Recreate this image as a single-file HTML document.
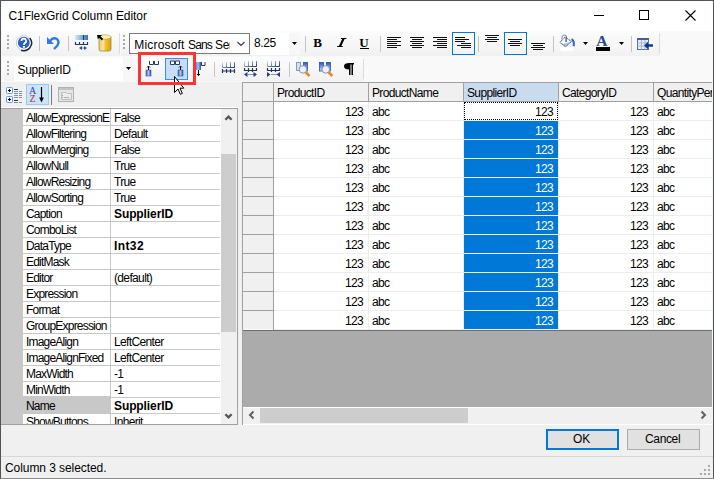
<!DOCTYPE html>
<html><head><meta charset="utf-8">
<style>
*{box-sizing:border-box}
html,body{margin:0;padding:0}
body{width:714px;height:479px;overflow:hidden;position:relative;background:#f0f0f0;font-family:"Liberation Sans",sans-serif;color:#000}
.a{position:absolute}
.t{position:absolute;white-space:nowrap;line-height:1}
.f11{font-size:11px;letter-spacing:-0.2px}
.p11{font-size:12px;letter-spacing:-0.8px}
.v11{font-size:12px;letter-spacing:-0.65px}
.g11{font-size:12px;letter-spacing:-0.65px}
.f12{font-size:12px;letter-spacing:-0.15px}
svg{position:absolute;overflow:visible}
</style></head><body>
<!-- window frame -->
<div class="a" style="left:0;top:0;width:714px;height:479px;border:1px solid #4f535a;border-bottom-color:#8a8a8a"></div>
<!-- title bar -->
<div class="a" style="left:1px;top:1px;width:712px;height:30px;background:#fff"></div>
<div class="t f12" style="left:8.5px;top:10px;letter-spacing:-0.07px">C1FlexGrid Column Editor</div>
<div class="a" style="left:594px;top:15px;width:10px;height:1px;background:#000"></div>
<div class="a" style="left:639px;top:10px;width:10px;height:10px;border:1px solid #000"></div>
<svg style="left:685px;top:10px" width="11" height="11"><path d="M0.5 0.5L10.5 10.5M10.5 0.5L0.5 10.5" stroke="#000" stroke-width="1.1"/></svg>

<!-- toolstrip container -->
<div class="a" style="left:1px;top:31px;width:712px;height:51px;background:#f9f9f9"></div>


<!-- toolbar 1 -->
<div class="a" style="left:2px;top:31px;width:118px;height:25px;background:linear-gradient(#fcfcfc,#f1f1f1)"></div>
<div class="a" style="left:119px;top:33px;width:1px;height:21px;background:#dcdcdc"></div>
<!-- toolbar 2 -->
<div class="a" style="left:121px;top:31px;width:539px;height:25px;background:linear-gradient(#fcfcfc,#f1f1f1)"></div>
<div class="a" style="left:659px;top:33px;width:1px;height:21px;background:#dcdcdc"></div>
<!-- toolbar 3 -->
<div class="a" style="left:4px;top:57px;width:360px;height:24px;background:linear-gradient(#fcfcfc,#f2f2f2);border-top-right-radius:2px"></div>
<div class="a" style="left:363px;top:59px;width:1px;height:20px;background:#dadada"></div>
<!-- combos -->
<div class="a" style="left:14px;top:58px;width:121px;height:23px;background:#fff"></div>
<div class="a" style="left:123px;top:58px;width:12px;height:23px;background:#f7f7f7"></div>
<div class="t f12" style="left:17.5px;top:64px;font-size:12px;letter-spacing:-0.3px">SupplierID</div>
<div class="a" style="left:129px;top:33px;width:121px;height:21px;background:#fff;border:1px solid #7a7a7a"></div>
<div class="a" style="left:130px;top:34px;width:100px;height:19px;overflow:hidden"><div class="t f12" style="left:4.3px;top:5px;letter-spacing:0.17px">Microsoft</div><div class="t f12" style="left:58px;top:5px;letter-spacing:-0.85px">Sans</div><div class="t f12" style="left:85px;top:5px;letter-spacing:-0.3px">Ser</div></div>
<div class="a" style="left:250px;top:33px;width:50px;height:22px;background:#fff"></div>
<div class="a" style="left:289px;top:33px;width:11px;height:22px;background:#f7f7f7"></div>
<div class="t f12" style="left:254px;top:37px;letter-spacing:-0.4px">8.25</div>
<svg class="a" style="left:0;top:0" width="714" height="479">
 <!-- grippers -->
 <g fill="#a8a8a8">
  <rect x="7" y="35" width="2" height="2"/><rect x="7" y="39" width="2" height="2"/><rect x="7" y="43" width="2" height="2"/><rect x="7" y="47" width="2" height="2"/>
  <rect x="123" y="35" width="2" height="2"/><rect x="123" y="39" width="2" height="2"/><rect x="123" y="43" width="2" height="2"/><rect x="123" y="47" width="2" height="2"/>
  <rect x="7" y="61" width="2" height="2"/><rect x="7" y="65" width="2" height="2"/><rect x="7" y="69" width="2" height="2"/><rect x="7" y="73" width="2" height="2"/>
 </g>
 <!-- separators -->
 <g fill="#c4c4c4">
  <rect x="39" y="36" width="1" height="15"/><rect x="68" y="36" width="1" height="15"/>
  <rect x="305" y="36" width="1" height="16"/><rect x="380" y="36" width="1" height="16"/><rect x="478" y="36" width="1" height="16"/><rect x="553" y="36" width="1" height="16"/><rect x="631" y="36" width="1" height="16"/>
  <rect x="214" y="62" width="1" height="15"/><rect x="289" y="62" width="1" height="15"/>
 </g>
 <!-- help -->
 <circle cx="23.8" cy="43" r="7.4" fill="#fff" stroke="#c4cde0" stroke-width="1"/>
 <path d="M29.7 38.05 A7.7 7.7 0 0 1 21.17 50.24" fill="none" stroke="#22252e" stroke-width="1.4"/>
 <circle cx="23.8" cy="42.7" r="5.9" fill="#2a5fc4"/>
 <path d="M21.5 41 A2.3 2.3 0 1 1 24.7 43.1 Q23.9 43.7 23.9 45" fill="none" stroke="#fff" stroke-width="1.7"/>
 <rect x="22.9" y="46" width="2" height="1.8" fill="#fff"/>
 <!-- undo -->
 <path d="M50 41 Q53 37 57 39 Q60 42 57 46 L54 49" fill="none" stroke="#2f7ae6" stroke-width="2.4"/>
 <path d="M47 37 L47 44 L54 44 Z" fill="#2f7ae6"/>
 <!-- grid icon (toolbar1) -->
 <rect x="75" y="35" width="13" height="5" fill="url(#gb)"/>
 <rect x="83" y="35" width="1" height="5" fill="#1b3a6b"/>
 <path d="M75.5 42 V44.5 H87.5 V42 M79.5 42 V44.5 M83.5 42 V44.5" fill="none" stroke="#1b3a6b" stroke-width="1.2"/>
 <path d="M79 48 L82 46 L82 50 Z M84 46 L87 48 L84 50 Z" fill="#2a4f9a"/>
 <rect x="82.5" y="47.5" width="1" height="1" fill="#1b3a6b"/>
 <!-- db icon -->
 <path d="M99 37 V49 Q99 51 101 51 H109 Q111 51 111 49 V37 Z" fill="url(#dbg)" stroke="#9c8c4c" stroke-width="0.8"/>
 <ellipse cx="105" cy="37" rx="6" ry="2.2" fill="#fff3a8" stroke="#a89850" stroke-width="0.6"/>
 <path d="M97 35 H102 L100.6 36.4 L103.2 39 L101.8 40.4 L99.2 37.8 L97.8 39.2 Z" fill="#000"/>
 <defs>
  <linearGradient id="dbg" x1="0" x2="1"><stop offset="0" stop-color="#f3c85a"/><stop offset=".35" stop-color="#fbe9a0"/><stop offset=".55" stop-color="#f6bf2c"/><stop offset="1" stop-color="#e49c08"/></linearGradient>
  <linearGradient id="cg" x1="0" y1="0" x2="1" y2="1"><stop offset="0" stop-color="#e0e8f6"/><stop offset="1" stop-color="#1f3558"/></linearGradient>
  <linearGradient id="bb" x1="0" y1="0" x2="0" y2="1"><stop offset="0" stop-color="#1e5ad8"/><stop offset="1" stop-color="#c4d8f8"/></linearGradient>
  <linearGradient id="gb" x1="0" x2="1"><stop offset="0" stop-color="#dbe8fb"/><stop offset="1" stop-color="#2f6fd6"/></linearGradient>
  <linearGradient id="cyl" x1="0" x2="1"><stop offset="0" stop-color="#3a5fc0"/><stop offset=".5" stop-color="#a9c4f2"/><stop offset="1" stop-color="#2d4fae"/></linearGradient>
 </defs>
 <!-- combo arrows -->
 <path d="M237.5 42 L241 45.5 L244.5 42" fill="none" stroke="#333" stroke-width="1.1"/>
 <path d="M292 42 L297 42 L294.5 45 Z" fill="#000"/>
 <path d="M126 67 L131 67 L128.5 70 Z" fill="#000"/>
 <!-- B I U -->
 <text x="313.3" y="47" font-family="Liberation Serif" font-weight="bold" font-size="13" fill="#000">B</text>
 <path d="M341 38 H346.5 L346.2 39 H344.6 L341.3 46 H342.8 L342.5 47 H337 L337.3 46 H338.9 L342.2 39 H340.7 Z" fill="#000"/>
 <text x="359.3" y="47" font-family="Liberation Serif" font-weight="bold" font-size="13" fill="#000">U</text>
 <rect x="360" y="48" width="9" height="1" fill="#000"/>
 <!-- align icons -->
 <g fill="#111">
  <rect x="387" y="37" width="14" height="1"/><rect x="387" y="39" width="10" height="1"/><rect x="387" y="41" width="14" height="1"/><rect x="387" y="43" width="10" height="1"/><rect x="387" y="45" width="14" height="1"/><rect x="387" y="47" width="10" height="1"/>
  <rect x="410" y="37" width="14" height="1"/><rect x="412" y="39" width="10" height="1"/><rect x="410" y="41" width="14" height="1"/><rect x="412" y="43" width="10" height="1"/><rect x="410" y="45" width="14" height="1"/><rect x="412" y="47" width="10" height="1"/>
  <rect x="433" y="37" width="14" height="1"/><rect x="437" y="39" width="10" height="1"/><rect x="433" y="41" width="14" height="1"/><rect x="437" y="43" width="10" height="1"/><rect x="433" y="45" width="14" height="1"/><rect x="437" y="47" width="10" height="1"/>
  <rect x="455" y="37" width="10" height="1"/><rect x="455" y="39" width="14" height="1"/><rect x="455" y="41" width="10" height="1"/><rect x="461" y="43" width="10" height="1"/><rect x="457" y="45" width="14" height="1"/><rect x="461" y="47" width="10" height="1"/>
  <rect x="485" y="35" width="14" height="1"/><rect x="487" y="37" width="10" height="1"/><rect x="485" y="39" width="14" height="1"/><rect x="487" y="41" width="10" height="1"/>
  <rect x="508" y="39" width="14" height="1"/><rect x="510" y="41" width="10" height="1"/><rect x="508" y="43" width="14" height="1"/><rect x="510" y="45" width="10" height="1"/>
  <rect x="531" y="43" width="14" height="1"/><rect x="533" y="45" width="10" height="1"/><rect x="531" y="47" width="14" height="1"/><rect x="533" y="49" width="10" height="1"/>
 </g>
 <rect x="452.5" y="32.5" width="22" height="22" fill="none" stroke="#0078d7" stroke-width="1"/>
 <rect x="504.5" y="32.5" width="22" height="22" fill="none" stroke="#0078d7" stroke-width="1"/>
 <!-- fill bucket -->
 <rect x="560.5" y="47" width="12.5" height="4" fill="#fff"/>
 <path d="M562 44.5 L571.5 41.5 L565.6 46.7 Z" fill="#a9bfee"/>
 <path d="M560 42.3 L565.2 37 L571.5 41.5 L565.6 46.7 Z" fill="none" stroke="#2c3f78" stroke-width="1" stroke-dasharray="1.3 0.7"/>
 <path d="M562 39.5 Q561.5 35 564.5 35 Q567.2 35.3 566.6 38.5" fill="none" stroke="#6b7896" stroke-width="1"/>
 <rect x="565.3" y="37.5" width="1.6" height="4.5" fill="#667085"/>
 <path d="M571.6 39.2 Q574.6 41 573.6 46.3" fill="none" stroke="#2f62d8" stroke-width="2"/>
 <path d="M583 42 L588 42 L585.5 45 Z" fill="#000"/>
 <!-- font color A -->
 <text x="596.3" y="46" font-family="Liberation Serif" font-weight="bold" font-size="15.5" fill="#2b4892">A</text>
 <rect x="596" y="47" width="14" height="4" fill="#000"/>
 <path d="M619 42 L624 42 L621.5 45 Z" fill="#000"/>
 <!-- table insert -->
 <rect x="637.5" y="38.5" width="11" height="11" fill="#e6ecf8" stroke="#5b6c9c" stroke-width="1"/>
 <rect x="637" y="38" width="12" height="2" fill="#4a5c92"/>
 <path d="M637.5 43 H648.5 M637.5 46 H648.5 M641.5 40 V49.5 M645 40 V49.5" stroke="#a9b4d2" stroke-width="1"/>
 <path d="M644 45.5 L648 41.8 L648 44.3 L653 44.3 L653 46.7 L648 46.7 L648 49.2 Z" fill="#0b3c8c"/>
 <!-- toolbar3 icons -->
 <rect x="165.5" y="58.5" width="22" height="21" fill="#c6def5" stroke="#3d8ee6" stroke-width="1"/>
 <path d="M149.5 61 V64.5 H153.5 V61 M154.5 61 V64.5 H158.5 V61" fill="none" stroke="#2a3a5a" stroke-width="1"/>
 <path d="M148.5 70 V66.5 M147 67.5 L148.5 66 L150 67.5" fill="none" stroke="#000" stroke-width="1"/>
 <rect x="146" y="70" width="5" height="6" fill="url(#cyl)" stroke="#3a5aa0" stroke-width="0.6"/>
 <path d="M170.5 61 V64.5 H174.5 V61 H170.5 M175.5 61 V64.5 H179.5 V61 H175.5" fill="#fff" stroke="#2a3a5a" stroke-width="1"/>
 <path d="M180.5 70 V66.5 M179 67.5 L180.5 66 L182 67.5" fill="none" stroke="#000" stroke-width="1"/>
 <rect x="178" y="70" width="5" height="6" fill="url(#cyl)" stroke="#3a5aa0" stroke-width="0.6"/>
 <rect x="195" y="62" width="6" height="8" fill="url(#cyl)"/>
 <path d="M201.5 62 V65.5 H205 V62" fill="none" stroke="#2a3a5a" stroke-width="1"/>
 <path d="M198.5 70 V75.5 M197 74 L198.5 75.5 L200 74" fill="none" stroke="#000" stroke-width="1"/>
 <g fill="none" stroke="url(#cg)" stroke-width="1">
  <path d="M222.5 62 V67.5 H234.5 V62 M226.5 62 V67.5 M230.5 62 V67.5"/>
  <path d="M244.5 61 V66.5 H256.5 V61 M248.5 61 V66.5 M252.5 61 V66.5"/>
  <path d="M267.5 61 V66.5 H279.5 V61 M271.5 61 V66.5 M275.5 61 V66.5"/>
 </g>
 <g fill="none" stroke="#1f3558" stroke-width="1.2">
  <path d="M222.5 69 V73 M226.5 69 V73 M230.5 69 V73 M234.5 69 V73 M222.5 71 H234.5"/>
  <path d="M244.5 68 V70.5 H256.5 V68 M248.5 68 V72 M252.5 68 V72"/>
  <path d="M267.5 68 V70.5 H279.5 V68 M271.5 68 V72 M275.5 68 V72"/>
 </g>
 <path d="M244 74.5 L247.5 72 V77 Z M257 74.5 L253.5 72 V77 Z" fill="#203f86"/>
 <g fill="#1f3558"><rect x="248.5" y="74" width="1" height="1"/><rect x="250.5" y="74" width="1" height="1"/><rect x="252.5" y="74" width="1" height="1"/>
 <rect x="271.5" y="74" width="1" height="1"/><rect x="273.5" y="74" width="1" height="1"/><rect x="275.5" y="74" width="1" height="1"/></g>
 <path d="M267 72 L270.5 74.5 L267 77 Z M280 72 L276.5 74.5 L280 77 Z" fill="#203f86"/>
 <!-- find icons -->
 <rect x="296.5" y="62.5" width="4" height="8" fill="#d3e2f9" stroke="#34456a" stroke-width="1" stroke-dasharray="1 1"/>
 <rect x="303.5" y="62.5" width="4" height="8.5" fill="url(#bb)" stroke="#2c4f9e" stroke-width="0.8"/>
 <path d="M305.5 72 L309.5 76" stroke="#e88a20" stroke-width="2.6"/>
 <circle cx="303" cy="69.4" r="3.8" fill="#eaf1fb" stroke="#8a93a3" stroke-width="1"/>
 <rect x="319.5" y="62.5" width="4" height="8.5" fill="url(#bb)" stroke="#2c4f9e" stroke-width="0.8"/>
 <rect x="326.5" y="62.5" width="4" height="8.5" fill="url(#bb)" stroke="#2c4f9e" stroke-width="0.8"/>
 <path d="M328.3 72 L332.3 76" stroke="#e88a20" stroke-width="2.6"/>
 <circle cx="325.8" cy="69.4" r="3.8" fill="#eaf1fb" stroke="#8a93a3" stroke-width="1"/>
 <path d="M349.5 63 H354 V64.5 H353 V75 H351.5 V64.5 H350.5 V75 H349 V69.5 Q344 69.5 344 66.2 Q344 63 349.5 63 Z" fill="#000"/>
 <!-- red box -->
 </svg>


<!-- property grid panel -->
<div class="a" style="left:1px;top:83px;width:237px;height:24px;background:#f0f0f0"></div>
<div class="a" style="left:1px;top:107px;width:237px;height:1px;background:#fff"></div>
<div class="a" style="left:1px;top:108px;width:237px;height:317px;background:#c8c8c8;border-top:1px solid #a0a0a0;border-bottom:1px solid #a0a0a0;border-right:1px solid #a0a0a0;overflow:hidden">
<div class="a" style="left:22px;top:0;width:198px;height:315px;background:#fff"></div>
<div class="a" style="left:22px;top:16px;width:197px;height:1px;background:#c8c8c8"></div>
<div class="t p11" style="width:85px;height:15px;overflow:hidden;left:25px;top:3px">AllowExpressionE</div>
<div class="t v11" style="left:113px;top:3px;">False</div>
<div class="a" style="left:22px;top:32px;width:197px;height:1px;background:#c8c8c8"></div>
<div class="t p11" style="width:85px;height:15px;overflow:hidden;left:25px;top:19px">AllowFiltering</div>
<div class="t v11" style="left:113px;top:19px;">Default</div>
<div class="a" style="left:22px;top:48px;width:197px;height:1px;background:#c8c8c8"></div>
<div class="t p11" style="width:85px;height:15px;overflow:hidden;left:25px;top:35px">AllowMerging</div>
<div class="t v11" style="left:113px;top:35px;">False</div>
<div class="a" style="left:22px;top:64px;width:197px;height:1px;background:#c8c8c8"></div>
<div class="t p11" style="width:85px;height:15px;overflow:hidden;left:25px;top:51px">AllowNull</div>
<div class="t v11" style="left:113px;top:51px;">True</div>
<div class="a" style="left:22px;top:80px;width:197px;height:1px;background:#c8c8c8"></div>
<div class="t p11" style="width:85px;height:15px;overflow:hidden;left:25px;top:67px">AllowResizing</div>
<div class="t v11" style="left:113px;top:67px;">True</div>
<div class="a" style="left:22px;top:96px;width:197px;height:1px;background:#c8c8c8"></div>
<div class="t p11" style="width:85px;height:15px;overflow:hidden;left:25px;top:83px">AllowSorting</div>
<div class="t v11" style="left:113px;top:83px;">True</div>
<div class="a" style="left:22px;top:112px;width:197px;height:1px;background:#c8c8c8"></div>
<div class="t p11" style="width:85px;height:15px;overflow:hidden;left:25px;top:99px">Caption</div>
<div class="t v11" style="left:113px;top:99px;font-weight:bold;font-size:12px;letter-spacing:-0.1px">SupplierID</div>
<div class="a" style="left:22px;top:128px;width:197px;height:1px;background:#c8c8c8"></div>
<div class="t p11" style="width:85px;height:15px;overflow:hidden;left:25px;top:115px">ComboList</div>
<div class="a" style="left:22px;top:144px;width:197px;height:1px;background:#c8c8c8"></div>
<div class="t p11" style="width:85px;height:15px;overflow:hidden;left:25px;top:131px">DataType</div>
<div class="t v11" style="left:113px;top:131px;font-weight:bold;font-size:12px;letter-spacing:0.4px">Int32</div>
<div class="a" style="left:22px;top:160px;width:197px;height:1px;background:#c8c8c8"></div>
<div class="t p11" style="width:85px;height:15px;overflow:hidden;left:25px;top:147px">EditMask</div>
<div class="a" style="left:22px;top:176px;width:197px;height:1px;background:#c8c8c8"></div>
<div class="t p11" style="width:85px;height:15px;overflow:hidden;left:25px;top:163px">Editor</div>
<div class="t v11" style="left:113px;top:163px;">(default)</div>
<div class="a" style="left:22px;top:192px;width:197px;height:1px;background:#c8c8c8"></div>
<div class="t p11" style="width:85px;height:15px;overflow:hidden;left:25px;top:179px">Expression</div>
<div class="a" style="left:22px;top:208px;width:197px;height:1px;background:#c8c8c8"></div>
<div class="t p11" style="width:85px;height:15px;overflow:hidden;left:25px;top:195px">Format</div>
<div class="a" style="left:22px;top:224px;width:197px;height:1px;background:#c8c8c8"></div>
<div class="t p11" style="width:85px;height:15px;overflow:hidden;left:25px;top:211px">GroupExpression</div>
<div class="a" style="left:22px;top:240px;width:197px;height:1px;background:#c8c8c8"></div>
<div class="t p11" style="width:85px;height:15px;overflow:hidden;left:25px;top:227px">ImageAlign</div>
<div class="t v11" style="left:113px;top:227px;">LeftCenter</div>
<div class="a" style="left:22px;top:256px;width:197px;height:1px;background:#c8c8c8"></div>
<div class="t p11" style="width:85px;height:15px;overflow:hidden;left:25px;top:243px">ImageAlignFixed</div>
<div class="t v11" style="left:113px;top:243px;">LeftCenter</div>
<div class="a" style="left:22px;top:272px;width:197px;height:1px;background:#c8c8c8"></div>
<div class="t p11" style="width:85px;height:15px;overflow:hidden;left:25px;top:259px">MaxWidth</div>
<div class="t v11" style="left:113px;top:259px;">-1</div>
<div class="a" style="left:22px;top:288px;width:197px;height:1px;background:#c8c8c8"></div>
<div class="t p11" style="width:85px;height:15px;overflow:hidden;left:25px;top:275px">MinWidth</div>
<div class="t v11" style="left:113px;top:275px;">-1</div>
<div class="a" style="left:22px;top:287px;width:87px;height:17px;background:#c8c8c8"></div>
<div class="a" style="left:22px;top:304px;width:197px;height:1px;background:#c8c8c8"></div>
<div class="t p11" style="width:85px;height:15px;overflow:hidden;left:25px;top:291px">Name</div>
<div class="t v11" style="left:113px;top:291px;font-weight:bold;font-size:12px;letter-spacing:-0.1px">SupplierID</div>
<div class="a" style="left:22px;top:320px;width:197px;height:1px;background:#c8c8c8"></div>
<div class="t p11" style="width:85px;height:15px;overflow:hidden;left:25px;top:307px">ShowButtons</div>
<div class="t v11" style="left:113px;top:307px;">Inherit</div>
<div class="a" style="left:109px;top:0;width:1px;height:315px;background:#c8c8c8"></div>
<div class="a" style="left:86px;top:0;width:23px;height:315px;background:transparent"></div>
<div class="a" style="left:220px;top:0;width:16px;height:315px;background:#f0f0f0"></div>
<div class="a" style="left:220px;top:45px;width:15px;height:178px;background:#cdcdcd"></div>
<svg class="a" style="left:220px;top:0" width="16" height="315"><path d="M4.4 10.8 L7.5 7.6 L10.6 10.8" fill="none" stroke="#555" stroke-width="2.3"/><path d="M4.4 305.2 L7.5 308.4 L10.6 305.2" fill="none" stroke="#555" stroke-width="2.3"/></svg>
</div>
<svg class="a" style="left:0;top:0" width="240" height="110">
 <rect x="26.5" y="84.5" width="22" height="20" fill="#cce4f7" stroke="#99c9ef" stroke-width="1"/>
 <text x="29" y="94" font-family="Liberation Serif" font-size="10" fill="#2a45b8">A</text>
 <text x="29.5" y="102" font-family="Liberation Serif" font-size="10" fill="#b83030">Z</text>
 <path d="M41.5 87 V101" stroke="#000" stroke-width="1.2"/><path d="M39.2 97.5 L41.5 102.5 L43.8 97.5 Z" fill="#000"/>
 <rect x="51" y="85" width="1" height="20" fill="#7a7a7a"/>
 <rect x="6.5" y="87.5" width="6" height="6" rx="1" fill="#fff" stroke="#5a9de0" stroke-width="1"/>
 <rect x="6.5" y="96.5" width="6" height="6" rx="1" fill="#fff" stroke="#5a9de0" stroke-width="1"/>
 <path d="M9.5 89 V92 M8 90.5 H11 M9.5 98 V101 M8 99.5 H11" stroke="#000" stroke-width="1.2"/>
 <g fill="#8090a8"><rect x="14" y="89" width="4" height="1" fill="#333"/><rect x="14" y="91" width="4" height="1"/><rect x="19" y="91" width="3" height="1"/><rect x="14" y="93" width="4" height="1"/><rect x="19" y="93" width="3" height="1"/><rect x="14" y="95" width="4" height="1"/><rect x="19" y="95" width="3" height="1"/><rect x="14" y="97" width="4" height="1"/><rect x="19" y="97" width="3" height="1"/><rect x="14" y="100" width="4" height="1" fill="#333"/><rect x="14" y="102" width="4" height="1"/><rect x="19" y="102" width="3" height="1"/></g>
 <rect x="58.5" y="87.5" width="15" height="14" fill="#e6e6e6" stroke="#b0b0b0" stroke-width="1"/>
 <rect x="59" y="88" width="14" height="2" fill="#c2c2c2"/>
 <path d="M61.5 92.5 H66.5 L67.5 93.5 H71.5 V99.5 H61.5 Z" fill="#ececec" stroke="#bcbcbc" stroke-width="1"/>
 <rect x="62" y="95" width="1" height="1" fill="#999"/><rect x="62" y="97" width="1" height="1" fill="#999"/><rect x="64" y="97" width="5" height="1" fill="#b0b0b0"/>
</svg>

<!-- grid -->
<div class="a" style="left:242px;top:82px;width:471px;height:343px;background:#ababab;border-left:1px solid #a0a0a0;border-top:1px solid #a0a0a0;overflow:hidden">
<div class="a" style="left:30px;top:18px;width:480px;height:230px;background:#fff;"></div>
<div class="a" style="left:0px;top:0px;width:30px;height:246px;background:#f0f0f0;"></div>
<div class="a" style="left:30px;top:0px;width:480px;height:18px;background:#f0f0f0;"></div>
<div class="a" style="left:221px;top:0px;width:94px;height:18px;background:#c9dcef;"></div>
<div class="a" style="left:221px;top:38px;width:94px;height:208px;background:#0078d7;"></div>
<div class="a" style="left:31px;top:37px;width:440px;height:1px;background:#ececec;"></div>
<div class="a" style="left:221px;top:37px;width:94px;height:1px;background:#f0f0f0;"></div>
<div class="a" style="left:31px;top:56px;width:440px;height:1px;background:#ececec;"></div>
<div class="a" style="left:221px;top:56px;width:94px;height:1px;background:#f0f0f0;"></div>
<div class="a" style="left:31px;top:75px;width:440px;height:1px;background:#ececec;"></div>
<div class="a" style="left:221px;top:75px;width:94px;height:1px;background:#f0f0f0;"></div>
<div class="a" style="left:31px;top:94px;width:440px;height:1px;background:#ececec;"></div>
<div class="a" style="left:221px;top:94px;width:94px;height:1px;background:#f0f0f0;"></div>
<div class="a" style="left:31px;top:113px;width:440px;height:1px;background:#ececec;"></div>
<div class="a" style="left:221px;top:113px;width:94px;height:1px;background:#f0f0f0;"></div>
<div class="a" style="left:31px;top:132px;width:440px;height:1px;background:#ececec;"></div>
<div class="a" style="left:221px;top:132px;width:94px;height:1px;background:#f0f0f0;"></div>
<div class="a" style="left:31px;top:151px;width:440px;height:1px;background:#ececec;"></div>
<div class="a" style="left:221px;top:151px;width:94px;height:1px;background:#f0f0f0;"></div>
<div class="a" style="left:31px;top:170px;width:440px;height:1px;background:#ececec;"></div>
<div class="a" style="left:221px;top:170px;width:94px;height:1px;background:#f0f0f0;"></div>
<div class="a" style="left:31px;top:189px;width:440px;height:1px;background:#ececec;"></div>
<div class="a" style="left:221px;top:189px;width:94px;height:1px;background:#f0f0f0;"></div>
<div class="a" style="left:31px;top:208px;width:440px;height:1px;background:#ececec;"></div>
<div class="a" style="left:221px;top:208px;width:94px;height:1px;background:#f0f0f0;"></div>
<div class="a" style="left:31px;top:227px;width:440px;height:1px;background:#ececec;"></div>
<div class="a" style="left:221px;top:227px;width:94px;height:1px;background:#f0f0f0;"></div>
<div class="a" style="left:125px;top:18px;width:1px;height:228px;background:#ececec;"></div>
<div class="a" style="left:220px;top:18px;width:1px;height:228px;background:#ececec;"></div>
<div class="a" style="left:315px;top:18px;width:1px;height:228px;background:#ececec;"></div>
<div class="a" style="left:410px;top:18px;width:1px;height:228px;background:#ececec;"></div>
<div class="a" style="left:30px;top:0px;width:1px;height:247px;background:#a0a0a0;"></div>
<div class="a" style="left:31px;top:246px;width:440px;height:1px;background:#f0f0f0;"></div>
<div class="a" style="left:0px;top:246px;width:30px;height:1px;background:#fafafa;"></div>
<div class="a" style="left:125px;top:0px;width:1px;height:18px;background:#a0a0a0;"></div>
<div class="a" style="left:220px;top:0px;width:1px;height:18px;background:#a0a0a0;"></div>
<div class="a" style="left:315px;top:0px;width:1px;height:18px;background:#a0a0a0;"></div>
<div class="a" style="left:410px;top:0px;width:1px;height:18px;background:#a0a0a0;"></div>
<div class="a" style="left:0px;top:18px;width:470px;height:1px;background:#a0a0a0;"></div>
<div class="a" style="left:0px;top:37px;width:30px;height:1px;background:#a0a0a0;"></div>
<div class="a" style="left:0px;top:56px;width:30px;height:1px;background:#a0a0a0;"></div>
<div class="a" style="left:0px;top:75px;width:30px;height:1px;background:#a0a0a0;"></div>
<div class="a" style="left:0px;top:94px;width:30px;height:1px;background:#a0a0a0;"></div>
<div class="a" style="left:0px;top:113px;width:30px;height:1px;background:#a0a0a0;"></div>
<div class="a" style="left:0px;top:132px;width:30px;height:1px;background:#a0a0a0;"></div>
<div class="a" style="left:0px;top:151px;width:30px;height:1px;background:#a0a0a0;"></div>
<div class="a" style="left:0px;top:170px;width:30px;height:1px;background:#a0a0a0;"></div>
<div class="a" style="left:0px;top:189px;width:30px;height:1px;background:#a0a0a0;"></div>
<div class="a" style="left:0px;top:208px;width:30px;height:1px;background:#a0a0a0;"></div>
<div class="a" style="left:0px;top:227px;width:30px;height:1px;background:#a0a0a0;"></div>
<div class="a" style="left:0px;top:247px;width:470px;height:1px;background:#6e6e6e;"></div>
<div class="a" style="left:221px;top:19px;width:94px;height:18px;background:transparent;border:1px dotted #000"></div>
<div class="t g11" style="left:34px;top:4px">ProductID</div>
<div class="t g11" style="left:129px;top:4px">ProductName</div>
<div class="t g11" style="left:224px;top:4px">SupplierID</div>
<div class="t g11" style="left:319px;top:4px">CategoryID</div>
<div class="t g11" style="left:414px;top:4px">QuantityPer</div>
<div class="t g11" style="left:30px;width:90px;text-align:right;top:23px;color:#000">123</div>
<div class="t g11" style="left:129px;top:23px">abc</div>
<div class="t g11" style="left:220px;width:90px;text-align:right;top:23px;color:#000">123</div>
<div class="t g11" style="left:315px;width:90px;text-align:right;top:23px;color:#000">123</div>
<div class="t g11" style="left:414px;top:23px">abc</div>
<div class="t g11" style="left:30px;width:90px;text-align:right;top:42px;color:#000">123</div>
<div class="t g11" style="left:129px;top:42px">abc</div>
<div class="t g11" style="left:220px;width:90px;text-align:right;top:42px;color:#fff">123</div>
<div class="t g11" style="left:315px;width:90px;text-align:right;top:42px;color:#000">123</div>
<div class="t g11" style="left:414px;top:42px">abc</div>
<div class="t g11" style="left:30px;width:90px;text-align:right;top:61px;color:#000">123</div>
<div class="t g11" style="left:129px;top:61px">abc</div>
<div class="t g11" style="left:220px;width:90px;text-align:right;top:61px;color:#fff">123</div>
<div class="t g11" style="left:315px;width:90px;text-align:right;top:61px;color:#000">123</div>
<div class="t g11" style="left:414px;top:61px">abc</div>
<div class="t g11" style="left:30px;width:90px;text-align:right;top:80px;color:#000">123</div>
<div class="t g11" style="left:129px;top:80px">abc</div>
<div class="t g11" style="left:220px;width:90px;text-align:right;top:80px;color:#fff">123</div>
<div class="t g11" style="left:315px;width:90px;text-align:right;top:80px;color:#000">123</div>
<div class="t g11" style="left:414px;top:80px">abc</div>
<div class="t g11" style="left:30px;width:90px;text-align:right;top:99px;color:#000">123</div>
<div class="t g11" style="left:129px;top:99px">abc</div>
<div class="t g11" style="left:220px;width:90px;text-align:right;top:99px;color:#fff">123</div>
<div class="t g11" style="left:315px;width:90px;text-align:right;top:99px;color:#000">123</div>
<div class="t g11" style="left:414px;top:99px">abc</div>
<div class="t g11" style="left:30px;width:90px;text-align:right;top:118px;color:#000">123</div>
<div class="t g11" style="left:129px;top:118px">abc</div>
<div class="t g11" style="left:220px;width:90px;text-align:right;top:118px;color:#fff">123</div>
<div class="t g11" style="left:315px;width:90px;text-align:right;top:118px;color:#000">123</div>
<div class="t g11" style="left:414px;top:118px">abc</div>
<div class="t g11" style="left:30px;width:90px;text-align:right;top:137px;color:#000">123</div>
<div class="t g11" style="left:129px;top:137px">abc</div>
<div class="t g11" style="left:220px;width:90px;text-align:right;top:137px;color:#fff">123</div>
<div class="t g11" style="left:315px;width:90px;text-align:right;top:137px;color:#000">123</div>
<div class="t g11" style="left:414px;top:137px">abc</div>
<div class="t g11" style="left:30px;width:90px;text-align:right;top:156px;color:#000">123</div>
<div class="t g11" style="left:129px;top:156px">abc</div>
<div class="t g11" style="left:220px;width:90px;text-align:right;top:156px;color:#fff">123</div>
<div class="t g11" style="left:315px;width:90px;text-align:right;top:156px;color:#000">123</div>
<div class="t g11" style="left:414px;top:156px">abc</div>
<div class="t g11" style="left:30px;width:90px;text-align:right;top:175px;color:#000">123</div>
<div class="t g11" style="left:129px;top:175px">abc</div>
<div class="t g11" style="left:220px;width:90px;text-align:right;top:175px;color:#fff">123</div>
<div class="t g11" style="left:315px;width:90px;text-align:right;top:175px;color:#000">123</div>
<div class="t g11" style="left:414px;top:175px">abc</div>
<div class="t g11" style="left:30px;width:90px;text-align:right;top:194px;color:#000">123</div>
<div class="t g11" style="left:129px;top:194px">abc</div>
<div class="t g11" style="left:220px;width:90px;text-align:right;top:194px;color:#fff">123</div>
<div class="t g11" style="left:315px;width:90px;text-align:right;top:194px;color:#000">123</div>
<div class="t g11" style="left:414px;top:194px">abc</div>
<div class="t g11" style="left:30px;width:90px;text-align:right;top:213px;color:#000">123</div>
<div class="t g11" style="left:129px;top:213px">abc</div>
<div class="t g11" style="left:220px;width:90px;text-align:right;top:213px;color:#fff">123</div>
<div class="t g11" style="left:315px;width:90px;text-align:right;top:213px;color:#000">123</div>
<div class="t g11" style="left:414px;top:213px">abc</div>
<div class="t g11" style="left:30px;width:90px;text-align:right;top:232px;color:#000">123</div>
<div class="t g11" style="left:129px;top:232px">abc</div>
<div class="t g11" style="left:220px;width:90px;text-align:right;top:232px;color:#fff">123</div>
<div class="t g11" style="left:315px;width:90px;text-align:right;top:232px;color:#000">123</div>
<div class="t g11" style="left:414px;top:232px">abc</div>
<div class="a" style="left:0px;top:324px;width:470px;height:1px;background:#fff;"></div>
<div class="a" style="left:0px;top:325px;width:470px;height:16px;background:#f0f0f0;"></div>
<div class="a" style="left:17px;top:325px;width:208px;height:15px;background:#cdcdcd;"></div>
<div class="a" style="left:0px;top:341px;width:470px;height:1px;background:#fff;"></div>
<svg class="a" style="left:0;top:325px" width="471" height="16"><path d="M10.5 3.5 L7 7 L10.5 10.5" fill="none" stroke="#606060" stroke-width="2"/><path d="M458.5 3.5 L462 7 L458.5 10.5" fill="none" stroke="#606060" stroke-width="2"/></svg>
</div>

<div class="a" style="left:712px;top:82px;width:1px;height:343px;background:#f4f4f4"></div>
<!-- buttons -->
<div class="a" style="left:546px;top:429px;width:73px;height:21px;background:#e1e1e1;border:2px solid #0078d7"></div>
<div class="t f12" style="left:573px;top:433px">OK</div>
<div class="a" style="left:627px;top:429px;width:73px;height:21px;background:#e1e1e1;border:1px solid #adadad"></div>
<div class="t f12" style="left:645px;top:433px;letter-spacing:-0.35px">Cancel</div>

<!-- size grip -->
<svg class="a" style="left:0;top:0" width="714" height="479"><g fill="#a9a9a9"><rect x="708" y="465" width="2" height="2"/><rect x="704" y="469" width="2" height="2"/><rect x="708" y="469" width="2" height="2"/><rect x="700" y="473" width="2" height="2"/><rect x="704" y="473" width="2" height="2"/><rect x="708" y="473" width="2" height="2"/></g></svg>
<!-- status bar -->
<div class="a" style="left:1px;top:456px;width:712px;height:1px;background:#d7d7d7"></div>
<div class="t f12" style="left:5px;top:462px;letter-spacing:-0.07px">Column 3 selected.</div>
<svg class="a" style="left:0;top:0" width="714" height="479">
 <path d="M174.5 76.5 V92.5 L178 89 L180.3 94.3 L182.3 93.4 L180 88.2 L183.8 88.2 Z" fill="#fff" stroke="#000" stroke-width="1"/>
 <rect x="139.5" y="53.5" width="55" height="30" fill="none" stroke="#fb3535" stroke-width="3"/>
</svg>
</body></html>
